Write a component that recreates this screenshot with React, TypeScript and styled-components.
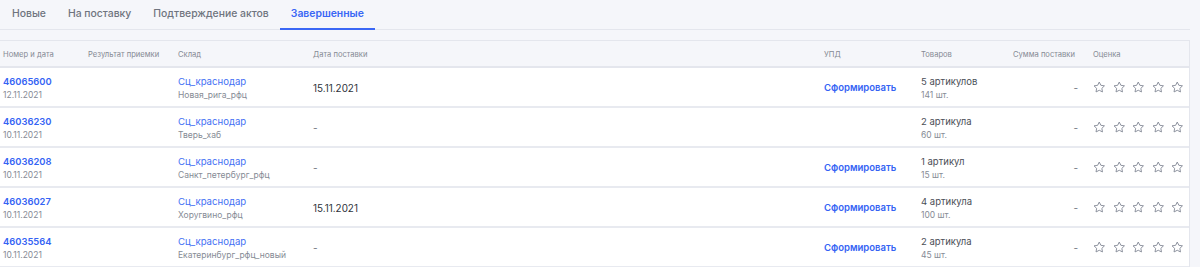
import React from 'react';
import styled, { createGlobalStyle } from 'styled-components';

const GlobalStyle = createGlobalStyle`
  body {
    margin: 0;
    background: #f5f6fa;
    font-family: Inter, "Noto Sans", sans-serif;
  }
`;

const Page = styled.div`
  width: 1200px;
  height: 267px;
  overflow: hidden;
`;

const Tabs = styled.nav`
  display: flex;
  height: 30px;
  width: 1190px;
  border-bottom: 1px solid #e4e6ed;
  box-sizing: border-box;
  padding-left: 1px;
`;

const Tab = styled.div<{ $active?: boolean }>`
  display: flex;
  align-items: center;
  padding: 0 11px 1px;
  height: 30px;
  box-sizing: border-box;
  font-size: 10.4px;
  font-weight: ${({ $active }) => ($active ? 600 : 500)};
  color: ${({ $active }) => ($active ? '#3a67f5' : '#6f747e')};
  border-bottom: 2px solid ${({ $active }) => ($active ? '#3a67f5' : 'transparent')};
  margin-bottom: -1px;
`;

const Table = styled.div`
  margin-top: 10px;
  width: 1190px;
  border-top: 1px solid #e4e6ed;
  border-right: 1px solid #e4e6ed;
  box-sizing: border-box;
`;

const cols = '85px 90px 135px 511px 97px 92px 80px 99px';

const HeadRow = styled.div`
  display: grid;
  grid-template-columns: ${cols};
  height: 25px;
  align-items: center;
  border-bottom: 2px solid #e4e6ed;
  font-size: 7.6px;
  color: #858a94;
`;

const Row = styled.div`
  display: grid;
  grid-template-columns: ${cols};
  height: 40px;
  align-items: center;
  background: #fff;
  border-bottom: 2px solid #e8eaf0;
  box-sizing: border-box;
`;

const Cell = styled.div<{ $right?: boolean }>`
  padding-left: 3px;
  display: flex;
  flex-direction: column;
  justify-content: center;
  align-items: ${({ $right }) => ($right ? 'flex-end' : 'flex-start')};
  padding-right: ${({ $right }) => ($right ? '12px' : '0')};
  padding-top: 1px;
`;

const Id = styled.div`
  font-size: 9.4px;
  font-weight: 600;
  color: #3563f4;
  line-height: 15px;
`;

const Sub = styled.div`
  font-size: 8.5px;
  color: #868b95;
  line-height: 13px;
`;

const Link = styled.div`
  font-size: 9.6px;
  color: #4470f4;
  line-height: 15px;
`;

const Plain = styled.div`
  font-size: 9.9px;
  color: #30343b;
`;

const Dash = styled.div`
  font-size: 10px;
  color: #6f747e;
`;

const Action = styled.div`
  font-size: 9.5px;
  font-weight: 600;
  color: #3563f4;
`;

const Goods = styled.div`
  font-size: 9.5px;
  color: #4a4e56;
  line-height: 15px;
`;

const Stars = styled.div`
  display: flex;
  gap: 7px;
`;

const Star = () => (
  <svg width="12.5" height="12.5" viewBox="0 0 24 24" fill="none" stroke="#878c99" strokeWidth="1.8" strokeLinejoin="round">
    <polygon points="12 2 15.09 8.26 22 9.27 17 14.14 18.18 21.02 12 17.77 5.82 21.02 7 14.14 2 9.27 8.91 8.26 12 2" />
  </svg>
);

const rows = [
  { id: '46065600', date: '12.11.2021', wh: 'Новая_рига_рфц', supply: '15.11.2021', upd: true, goods: '5 артикулов', qty: '141 шт.' },
  { id: '46036230', date: '10.11.2021', wh: 'Тверь_хаб', supply: '', upd: false, goods: '2 артикула', qty: '60 шт.' },
  { id: '46036208', date: '10.11.2021', wh: 'Санкт_петербург_рфц', supply: '', upd: true, goods: '1 артикул', qty: '15 шт.' },
  { id: '46036027', date: '10.11.2021', wh: 'Хоругвино_рфц', supply: '15.11.2021', upd: true, goods: '4 артикула', qty: '100 шт.' },
  { id: '46035564', date: '10.11.2021', wh: 'Екатеринбург_рфц_новый', supply: '', upd: true, goods: '2 артикула', qty: '45 шт.' },
];

export default function App() {
  return (
    <Page>
      <GlobalStyle />
      <Tabs>
        <Tab>Новые</Tab>
        <Tab>На поставку</Tab>
        <Tab>Подтверждение актов</Tab>
        <Tab $active>Завершенные</Tab>
      </Tabs>
      <Table>
        <HeadRow>
          <Cell>Номер и дата</Cell>
          <Cell>Результат приемки</Cell>
          <Cell>Склад</Cell>
          <Cell>Дата поставки</Cell>
          <Cell>УПД</Cell>
          <Cell>Товаров</Cell>
          <Cell>Сумма поставки</Cell>
          <Cell>Оценка</Cell>
        </HeadRow>
        {rows.map((r) => (
          <Row key={r.id}>
            <Cell>
              <Id>{r.id}</Id>
              <Sub>{r.date}</Sub>
            </Cell>
            <Cell />
            <Cell>
              <Link>Сц_краснодар</Link>
              <Sub>{r.wh}</Sub>
            </Cell>
            <Cell>{r.supply ? <Plain>{r.supply}</Plain> : <Dash>-</Dash>}</Cell>
            <Cell>{r.upd && <Action>Сформировать</Action>}</Cell>
            <Cell>
              <Goods>{r.goods}</Goods>
              <Sub>{r.qty}</Sub>
            </Cell>
            <Cell $right>
              <Dash>-</Dash>
            </Cell>
            <Cell>
              <Stars>
                {[0, 1, 2, 3, 4].map((i) => (
                  <Star key={i} />
                ))}
              </Stars>
            </Cell>
          </Row>
        ))}
      </Table>
    </Page>
  );
}
